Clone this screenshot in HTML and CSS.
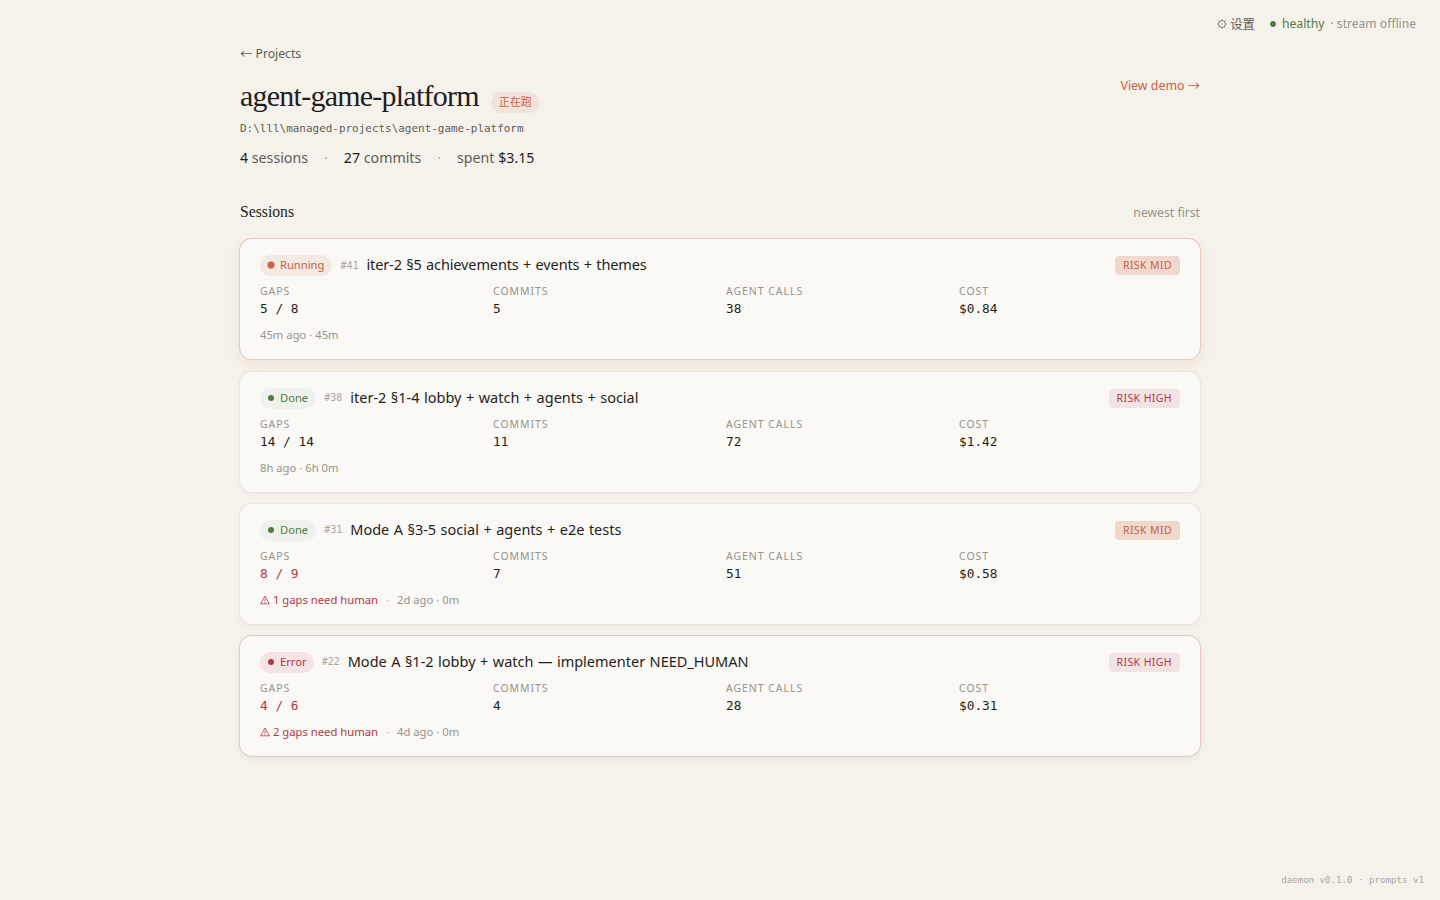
FILE: index.html
```html
<!DOCTYPE html>
<html lang="zh-CN">
<head>
  <meta charset="UTF-8" />
  <meta name="viewport" content="width=device-width, initial-scale=1.0"/>
  <title>agent-game-platform</title>
  <link rel="stylesheet" href="styles.css">
</head>
<body>
  <header class="topbar">
    <a href="#" class="settings">
      <svg class="gear" viewBox="0 0 10 10"><circle cx="5" cy="5" r="3.5"/><circle class="hub" cx="5" cy="5" r="0.6"/><path d="M5 0.4v1M5 8.6v1M0.4 5h1M8.6 5h1M1.7 1.7l0.8 0.8M7.5 7.5l0.8 0.8M1.7 8.3l0.8-0.8M7.5 2.5l0.8-0.8"/></svg>
      <span class="settings-text">设置</span>
    </a>
    <span class="dot health-dot"></span>
    <span class="healthy">healthy</span>
    <span class="stream">· stream offline</span>
  </header>

  <main class="container">
    <a href="#" class="back"><span class="arrow">←</span>Projects</a>

    <div class="project-head">
      <div class="title-row">
        <h1>agent-game-platform</h1>
        <span class="live-pill">正在跑</span>
      </div>
      <a href="#" class="demo">View demo<span class="arrow">→</span></a>
    </div>
    <p class="path">D:\lll\managed-projects\agent-game-platform</p>
    <p class="summary">
      <span><b>4</b> sessions</span><i>·</i><span><b>27</b> commits</span><i>·</i><span>spent <b>$3.15</b></span>
    </p>

    <div class="section-head">
      <h2>Sessions</h2>
      <span class="order">newest first</span>
    </div>

    <div class="sessions">
      <article class="card running">
        <div class="card-head">
          <span class="status"><span class="dot"></span>Running</span>
          <span class="num">#41</span>
          <span class="name">iter-2 §5 achievements + events + themes</span>
          <span class="risk mid">RISK MID</span>
        </div>
        <dl class="stats">
          <div><dt>GAPS</dt><dd>5 / 8</dd></div>
          <div><dt>COMMITS</dt><dd>5</dd></div>
          <div><dt>AGENT CALLS</dt><dd>38</dd></div>
          <div><dt>COST</dt><dd>$0.84</dd></div>
        </dl>
        <p class="meta"><span>45m ago · 45m</span></p>
      </article>

      <article class="card done">
        <div class="card-head">
          <span class="status"><span class="dot"></span>Done</span>
          <span class="num">#38</span>
          <span class="name">iter-2 §1-4 lobby + watch + agents + social</span>
          <span class="risk high">RISK HIGH</span>
        </div>
        <dl class="stats">
          <div><dt>GAPS</dt><dd>14 / 14</dd></div>
          <div><dt>COMMITS</dt><dd>11</dd></div>
          <div><dt>AGENT CALLS</dt><dd>72</dd></div>
          <div><dt>COST</dt><dd>$1.42</dd></div>
        </dl>
        <p class="meta"><span>8h ago · 6h 0m</span></p>
      </article>

      <article class="card done">
        <div class="card-head">
          <span class="status"><span class="dot"></span>Done</span>
          <span class="num">#31</span>
          <span class="name">Mode A §3-5 social + agents + e2e tests</span>
          <span class="risk mid">RISK MID</span>
        </div>
        <dl class="stats">
          <div><dt>GAPS</dt><dd class="bad">8 / 9</dd></div>
          <div><dt>COMMITS</dt><dd>7</dd></div>
          <div><dt>AGENT CALLS</dt><dd>51</dd></div>
          <div><dt>COST</dt><dd>$0.58</dd></div>
        </dl>
        <p class="meta">
          <span class="warn"><svg viewBox="0 0 10 10"><path d="M5 1L9.4 8.8H0.6Z M5 3.6v2.8 M5 7v0.9"/></svg>1 gaps need human</span><i>·</i><span>2d ago · 0m</span>
        </p>
      </article>

      <article class="card error">
        <div class="card-head">
          <span class="status"><span class="dot"></span>Error</span>
          <span class="num">#22</span>
          <span class="name">Mode A §1-2 lobby + watch — implementer NEED_HUMAN</span>
          <span class="risk high">RISK HIGH</span>
        </div>
        <dl class="stats">
          <div><dt>GAPS</dt><dd class="bad">4 / 6</dd></div>
          <div><dt>COMMITS</dt><dd>4</dd></div>
          <div><dt>AGENT CALLS</dt><dd>28</dd></div>
          <div><dt>COST</dt><dd>$0.31</dd></div>
        </dl>
        <p class="meta">
          <span class="warn"><svg viewBox="0 0 10 10"><path d="M5 1L9.4 8.8H0.6Z M5 3.6v2.8 M5 7v0.9"/></svg>2 gaps need human</span><i>·</i><span>4d ago · 0m</span>
        </p>
      </article>
    </div>
  </main>

  <footer class="version">daemon v0.1.0 · prompts v1</footer>
</body>
</html>
```

FILE: styles.css
```css
* {
  box-sizing: border-box;
  margin: 0;
  padding: 0;
}

body {
  min-height: 100vh;
  display: flex;
  flex-direction: column;
  background: #f5f2eb;
  color: #1f1e1c;
  font-family: "Noto Sans", "Noto Sans CJK SC", sans-serif;
  font-size: 12.2px;
}

a {
  color: inherit;
  text-decoration: none;
}

i {
  font-style: normal;
}

.topbar {
  height: 46px;
  padding: 1px 24px 0 0;
  display: flex;
  justify-content: flex-end;
  align-items: center;
}

.settings {
  display: flex;
  align-items: center;
  gap: 3px;
  margin-right: 15px;
  color: #5f5b55;
}

.settings-text {
  font-family: "Noto Sans CJK SC", sans-serif;
  font-size: 12.4px;
}

.gear {
  width: 10px;
  height: 10px;
  fill: none;
  stroke: #5f5b55;
  stroke-width: 0.8;
}

.gear .hub {
  fill: #5f5b55;
  stroke: none;
}

.dot {
  width: 6px;
  height: 6px;
  border-radius: 50%;
  background: currentColor;
}

.health-dot {
  margin-right: 6px;
  color: #557a4a;
}

.healthy {
  margin-right: 6px;
  color: #557a4a;
}

.stream {
  font-size: 12.1px;
  color: #96938b;
}

.arrow {
  font-family: "Noto Sans CJK SC", sans-serif;
  font-size: 12.5px;
}

.container {
  width: 960px;
  margin: 0 auto;
}

.back {
  display: flex;
  gap: 3px;
  height: 16px;
  line-height: 16px;
  color: #5f5b55;
}

.project-head {
  display: flex;
  justify-content: space-between;
  height: 38px;
  margin-top: 15px;
}

.title-row {
  display: flex;
  gap: 12px;
}

h1 {
  font-family: "Liberation Serif", serif;
  font-size: 30px;
  font-weight: 400;
  line-height: 38px;
  letter-spacing: -0.76px;
}

.live-pill {
  height: 21px;
  margin-top: 15px;
  padding: 0 8px;
  border-radius: 11px;
  background: #f1e3db;
  color: #c8623f;
  font-family: "Noto Sans CJK SC", sans-serif;
  font-size: 11px;
  line-height: 19px;
}

.demo {
  display: flex;
  gap: 3px;
  height: 16px;
  line-height: 17px;
  font-size: 12.4px;
  color: #c8623f;
}

.path {
  margin-top: 6px;
  font-family: "DejaVu Sans Mono", monospace;
  font-size: 10.96px;
  line-height: 16px;
  color: #5f5b55;
}

.summary {
  display: flex;
  gap: 16px;
  height: 22px;
  margin-top: 10px;
  line-height: 22px;
  font-size: 14.2px;
  color: #5f5b55;
}

.summary b {
  font-weight: 400;
  color: #1f1e1c;
}

.summary i,
.meta i {
  color: #b5b2a8;
}

.section-head {
  display: flex;
  justify-content: space-between;
  height: 24px;
  margin-top: 31px;
  line-height: 24px;
}

h2 {
  font-family: "Liberation Serif", serif;
  font-size: 15.7px;
  font-weight: 400;
}

.order {
  line-height: 26px;
  color: #96938b;
}

.sessions {
  display: flex;
  flex-direction: column;
  gap: 12.2px;
  margin-top: 15.35px;
}

.card {
  height: 120px;
  padding: 16px 20px;
  border-radius: 12px;
  background: #fbf9f5;
  box-shadow: 0 0 0 1px rgba(31, 30, 28, 0.04), 0 2px 8px rgba(31, 30, 28, 0.04);
}

.card.running {
  box-shadow: 0 0 0 1px #ebc8b8, 0 4px 16px rgba(200, 98, 63, 0.12);
}

.card.error {
  box-shadow: 0 0 0 1px #e5c8c6, 0 2px 8px rgba(31, 30, 28, 0.06);
}

.card-head {
  display: flex;
  align-items: center;
  height: 21px;
}

.status {
  display: flex;
  align-items: center;
  gap: 6px;
  height: 21px;
  padding: 0 8px 1px;
  border-radius: 11px;
  font-size: 11.2px;
  line-height: 18px;
}

.running .status {
  background: #f5e9e3;
  color: #c8623f;
}

.running .dot {
  box-shadow: 0 0 0 1px rgba(200, 98, 63, 0.5);
}

.done .status {
  background: #eef2ea;
  color: #557a4a;
}

.error .status {
  padding-right: 7px;
  background: #f4e4e3;
  color: #b23646;
}

.num {
  margin: 0 8px;
  font-family: "DejaVu Sans Mono", monospace;
  font-size: 10px;
  line-height: 18px;
  color: #aaa79f;
}

.name {
  height: 21px;
  font-size: 14.5px;
  line-height: 19px;
  word-spacing: 0.7px;
}

.running .name {
  letter-spacing: -0.12px;
}

.risk {
  height: 19px;
  margin-left: auto;
  padding: 0 8px;
  border-radius: 4px;
  font-size: 10.5px;
  line-height: 19px;
  letter-spacing: 0.4px;
}

.risk.mid {
  background: #f0d8cc;
  color: #c8623f;
}

.risk.high {
  background: #f3e4e3;
  color: #b23646;
}

.stats {
  display: grid;
  grid-template-columns: repeat(4, 1fr);
  gap: 12px;
  margin-top: 8px;
}

dt {
  height: 14px;
  font-size: 10.5px;
  line-height: 14px;
  letter-spacing: 0.95px;
  color: #96938b;
}

dd {
  height: 20px;
  font-family: "DejaVu Sans Mono", monospace;
  font-size: 12.8px;
  line-height: 21px;
}

dd.bad,
.warn {
  color: #b23646;
}

.meta {
  display: flex;
  gap: 8px;
  height: 16px;
  margin-top: 9px;
  font-size: 11.25px;
  line-height: 16px;
  color: #96938b;
}

.warn {
  display: flex;
  align-items: center;
  gap: 3px;
}

.warn svg {
  width: 10px;
  height: 10px;
  fill: none;
  stroke: currentColor;
  stroke-width: 0.8;
}

.version {
  margin: auto 16px 13px auto;
  font-family: "DejaVu Sans Mono", monospace;
  font-size: 9.14px;
  line-height: 14px;
  color: #aaa79f;
}
```
